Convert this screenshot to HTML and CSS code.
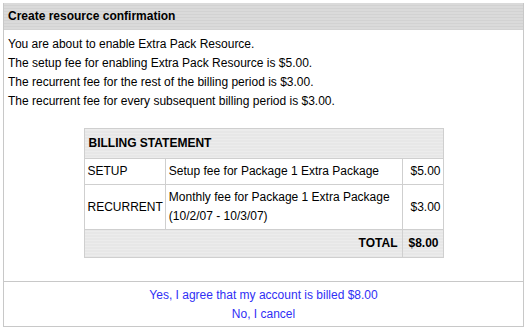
FILE: index.html
```html
<!DOCTYPE html>
<html lang="en">
<head>
    <meta charset="UTF-8">
    <title>Create resource confirmation</title>
    <link rel="stylesheet" href="styles.css">
</head>
<body>
<div class="box">
    <div class="title">Create resource confirmation</div>
    <div class="content">
        <p>You are about to enable Extra Pack Resource.</p>
        <p>The setup fee for enabling Extra Pack Resource is $5.00.</p>
        <p>The recurrent fee for the rest of the billing period is $3.00.</p>
        <p>The recurrent fee for every subsequent billing period is $3.00.</p>

        <table class="bill">
            <tr>
                <th colspan="3" class="bill-head">BILLING STATEMENT</th>
            </tr>
            <tr>
                <td class="type">SETUP</td>
                <td class="desc">Setup fee for Package 1 Extra Package</td>
                <td class="amount">$5.00</td>
            </tr>
            <tr>
                <td class="type">RECURRENT</td>
                <td class="desc">Monthly fee for Package 1 Extra Package<br>(10/2/07 - 10/3/07)</td>
                <td class="amount">$3.00</td>
            </tr>
            <tr class="total">
                <td colspan="2" class="total-label">TOTAL</td>
                <td class="amount">$8.00</td>
            </tr>
        </table>
    </div>
    <div class="actions">
        <a href="#">Yes, I agree that my account is billed $8.00</a>
        <a href="#">No, I cancel</a>
    </div>
</div>
</body>
</html>
```

FILE: styles.css
```css
* {
    padding: 0;
    margin: 0;
}

body {
    font-family: "Liberation Sans", Arial, sans-serif;
    font-size: 12px;
    color: #000;
    background: #fff;
}

.box {
    margin: 3px 3px 0 3px;
    border: 1px solid #c8c8c8;
    border-top: 0;
}

.title {
    height: 27px;
    line-height: 27px;
    padding-left: 4px;
    font-weight: bold;
    font-size: 12px;
    background: repeating-linear-gradient(#dadada 0, #dadada 2px, #d2d2d2 2px, #d2d2d2 3px);
}

.content {
    padding: 5px 4px 23px 4px;
}

.content p {
    line-height: 19px;
}

.bill {
    width: 360px;
    margin: 17px auto 0 auto;
    border-collapse: collapse;
    border: 1px solid #cfcfcf;
}

.bill td,
.bill th {
    border: 1px solid #cfcfcf;
    line-height: 19px;
    padding: 3px 2px 3px 3px;
    vertical-align: middle;
}

.bill-head {
    text-align: left;
    font-size: 12px;
    padding: 5px 4px !important;
    background: repeating-linear-gradient(#ececec 0, #ececec 2px, #e2e2e2 2px, #e2e2e2 3px);
}

.type {
    width: 74px;
}

.amount {
    width: 33px;
    text-align: right;
}

.total td {
    font-weight: bold;
    padding: 4px 4px 4px 3px;
    background: repeating-linear-gradient(#ececec 0, #ececec 2px, #e2e2e2 2px, #e2e2e2 3px);
}

.total-label {
    text-align: right;
}

.actions {
    border-top: 1px solid #c8c8c8;
    padding: 4px 0 2px 0;
    text-align: center;
}

.actions a {
    display: block;
    line-height: 19px;
    color: #2f2ff5;
    text-decoration: none;
}
```
